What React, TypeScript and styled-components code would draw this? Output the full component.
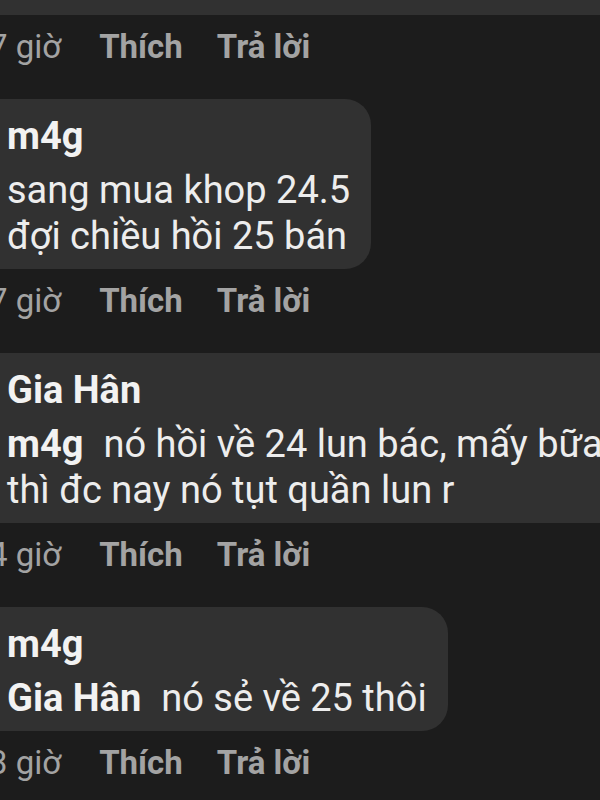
import React from 'react'
import styled, { createGlobalStyle } from 'styled-components'

const GlobalStyle = createGlobalStyle`
    html, body {
        margin: 0;
        padding: 0;
        background: #1c1c1c;
        overflow: hidden;
    }
    body {
        font-family: Roboto, 'Noto Sans', 'Liberation Sans', sans-serif;
        -webkit-font-smoothing: antialiased;
    }
`

const Page = styled.div`
    width: 600px;
    height: 800px;
    overflow: hidden;
    background: #1c1c1c;
`

const Thread = styled.div`
    margin-left: -30px;
    display: flex;
    flex-direction: column;
    align-items: flex-start;
`

// bottom of the comment above, cut by the top of the screen
const CutBubble = styled.div`
    width: 660px;
    height: 15px;
    background: #313131;
    border-radius: 0 0 26px 26px;
`

const Bubble = styled.div<{ $wide?: boolean }>`
    box-sizing: border-box;
    width: ${({ $wide }) => ($wide ? '700px' : 'auto')};
    margin-top: 32px;
    padding: 14px 21px 10px 37px;
    background: #313131;
    border-radius: 26px;
    color: #ededed;
    white-space: nowrap;
`

const Author = styled.div`
    font-size: 38px;
    font-weight: 700;
    line-height: 46px;
    color: #f2f2f2;
`

const Body = styled.div`
    margin-top: 8px;
    font-size: 38px;
    line-height: 46px;
`

const Mention = styled.span`
    font-weight: 700;
    margin-right: 20px;
    color: #f2f2f2;
`

const Actions = styled.div`
    display: flex;
    align-items: baseline;
    margin-top: 12px;
    padding-left: 19px;
    font-size: 33px;
    line-height: 40px;
    color: #a3a3a3;
`

const Time = styled.span`
    font-weight: 400;
    margin-right: 38px;
`

const Action = styled.span`
    font-weight: 700;
    margin-right: 34px;
`

type Comment = {
    author: string
    mention?: string
    lines: string[]
    time: string
    wide?: boolean
}

const comments: Comment[] = [
    {
        author: 'm4g',
        lines: ['sang mua khop 24.5', 'đợi chiều hồi 25 bán'],
        time: '7 giờ',
    },
    {
        author: 'Gia Hân',
        mention: 'm4g',
        lines: ['nó hồi về 24 lun bác, mấy bữa', 'thì đc nay nó tụt quần lun r'],
        time: '4 giờ',
        wide: true,
    },
    {
        author: 'm4g',
        mention: 'Gia Hân',
        lines: ['nó sẻ về 25 thôi'],
        time: '3 giờ',
    },
]

const ActionRow = ({ time }: { time: string }) => (
    <Actions>
        <Time>{time}</Time>
        <Action>Thích</Action>
        <Action>Trả lời</Action>
    </Actions>
)

export default function App() {
    return (
        <Page>
            <GlobalStyle />
            <Thread>
                <CutBubble />
                <ActionRow time="7 giờ" />
                {comments.map((c, i) => (
                    <React.Fragment key={i}>
                        <Bubble $wide={c.wide}>
                            <Author>{c.author}</Author>
                            <Body>
                                {c.lines.map((line, j) => (
                                    <div key={j}>
                                        {j === 0 && c.mention && (
                                            <Mention>{c.mention}</Mention>
                                        )}
                                        {line}
                                    </div>
                                ))}
                            </Body>
                        </Bubble>
                        <ActionRow time={c.time} />
                    </React.Fragment>
                ))}
            </Thread>
        </Page>
    )
}
